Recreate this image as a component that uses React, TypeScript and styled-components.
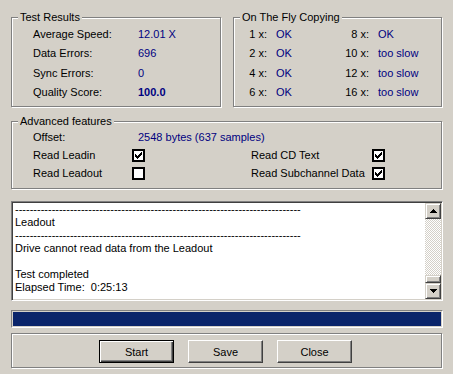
import React from "react";
import styled, { createGlobalStyle, css } from "styled-components";

const Global = createGlobalStyle`
  html, body { margin: 0; padding: 0; background: #d4d0c8; }
  body {
    font-family: "Liberation Sans", Arial, sans-serif;
    font-size: 11px;
    color: #000;
  }
`;

const Window = styled.div`
  width: 453px;
  height: 374px;
  box-sizing: border-box;
  padding: 17px 0 0 11px;
  display: flex;
  flex-direction: column;
  background: #d4d0c8;
  overflow: hidden;
  line-height: 13px;
`;

const TopRow = styled.div`
  display: flex;
  gap: 12px;
`;

const Group = styled.div<{ $w: number; $h: number; $mt?: number }>`
  position: relative;
  box-sizing: border-box;
  width: ${(p) => p.$w}px;
  height: ${(p) => p.$h}px;
  margin-top: ${(p) => p.$mt ?? 0}px;
  border: 1px solid #808080;
  box-shadow: inset 1px 1px 0 #fff, 1px 1px 0 #fff;
`;

const GroupTitle = styled.span`
  position: absolute;
  left: 6px;
  top: -7px;
  padding: 0 2px;
  background: #d4d0c8;
  line-height: 13px;
  white-space: nowrap;
`;

const StatsGrid = styled.div`
  display: grid;
  grid-template-columns: 105px auto;
  grid-auto-rows: 19.33px;
  align-items: center;
  padding: 7px 0 0 21px;
`;

const Value = styled.span<{ $bold?: boolean }>`
  color: #000080;
  font-weight: ${(p) => (p.$bold ? 700 : 400)};
  white-space: nowrap;
`;

const FlyGrid = styled.div`
  display: grid;
  grid-template-columns: 33px 73px 29px auto;
  grid-auto-rows: 19.33px;
  align-items: center;
  padding-top: 7px;
`;

const SpeedLabel = styled.span`
  text-align: right;
  white-space: nowrap;
`;

const SpeedValue = styled(Value)`
  padding-left: 9px;
`;

const AdvancedBody = styled.div`
  display: flex;
  flex-direction: column;
  padding: 6px 0 0 21px;
`;

const OffsetRow = styled.div`
  display: grid;
  grid-template-columns: 105px auto;
  height: 18.4px;
  align-items: center;
`;

const CheckRow = styled.div`
  display: grid;
  grid-template-columns: 99px 13px 106px 121px 13px;
  height: 18.4px;
  align-items: center;
  white-space: nowrap;
`;

const CheckBox = styled.span`
  box-sizing: border-box;
  width: 13px;
  height: 13px;
  border: 2px solid #000;
  background: #fff;
  display: flex;
  align-items: center;
  justify-content: center;
`;

const LogBox = styled.div`
  box-sizing: border-box;
  width: 432px;
  height: 100px;
  margin-top: 12px;
  border: 1px solid;
  border-color: #808080 #fff #fff #808080;
  padding: 1px;
  box-shadow: inset 1px 1px 0 #404040, inset -1px -1px 0 #d4d0c8;
  background: #fff;
  display: flex;
`;

const LogText = styled.div`
  flex: 1;
  padding-left: 2px;
  white-space: pre;
  overflow: hidden;
  line-height: 13px;
`;

const ScrollBar = styled.div`
  width: 16px;
  display: flex;
  flex-direction: column;
`;

const ScrollButton = styled.div<{ $h?: number }>`
  box-sizing: border-box;
  width: 16px;
  height: ${(p) => p.$h ?? 16}px;
  background: #d4d0c8;
  border: 1px solid;
  border-color: #d4d0c8 #404040 #404040 #d4d0c8;
  box-shadow: inset 1px 1px 0 #fff, inset -1px -1px 0 #808080;
  display: flex;
  align-items: center;
  justify-content: center;
`;

const Track = styled.div`
  flex: 1;
  background-color: #d4d0c8;
  background-image: conic-gradient(#fff 25%, #d4d0c8 0 50%, #fff 0 75%, #d4d0c8 0);
  background-size: 2px 2px;
`;

const Progress = styled.div`
  box-sizing: border-box;
  width: 432px;
  height: 18px;
  margin-top: 9px;
  border: 1px solid;
  border-color: #808080 #fff #fff #808080;
  padding: 1px;
`;

const ProgressFill = styled.div`
  height: 100%;
  background: #0a246a;
`;

const ButtonRow = styled.div`
  display: flex;
  gap: 14px;
  padding: 6px 0 0 87px;
`;

const Button = styled.button<{ $default?: boolean }>`
  box-sizing: border-box;
  width: 75px;
  height: 23px;
  padding: 0;
  margin: 0;
  font: 11px "Liberation Sans", Arial, sans-serif;
  color: #000;
  background: #d4d0c8;
  border: 1px solid;
  border-color: #fff #404040 #404040 #fff;
  box-shadow: inset -1px -1px 0 #808080;
  ${(p) =>
    p.$default &&
    css`
      border-color: #000;
      box-shadow: inset 1px 1px 0 #fff, inset -1px -1px 0 #404040, inset -2px -2px 0 #808080;
    `}
`;

const checkPixels: [number, number, number][] = [
  [6, 0, 1],
  [5, 1, 2],
  [0, 2, 1],
  [4, 2, 3],
  [0, 3, 2],
  [3, 3, 3],
  [0, 4, 5],
  [1, 5, 3],
  [2, 6, 1],
];

const Check = ({ on }: { on: boolean }) => (
  <CheckBox>
    {on && (
      <svg width="7" height="7" viewBox="0 0 7 7" shapeRendering="crispEdges">
        {checkPixels.map(([x, y, w], i) => (
          <rect key={i} x={x} y={y} width={w} height={1} fill="#000" />
        ))}
      </svg>
    )}
  </CheckBox>
);

const Arrow = ({ up }: { up: boolean }) => (
  <svg width="7" height="4" viewBox="0 0 7 4" shapeRendering="crispEdges">
    <polygon points={up ? "3.5,0 7,4 0,4" : "0,0 7,0 3.5,4"} fill="#000" />
  </svg>
);

const stats = [
  { label: "Average Speed:", value: "12.01 X" },
  { label: "Data Errors:", value: "696" },
  { label: "Sync Errors:", value: "0" },
  { label: "Quality Score:", value: "100.0", bold: true },
];

const fly = [
  ["1 x:", "OK", "8 x:", "OK"],
  ["2 x:", "OK", "10 x:", "too slow"],
  ["4 x:", "OK", "12 x:", "too slow"],
  ["6 x:", "OK", "16 x:", "too slow"],
];

const dashes = "-".repeat(78);
const logLines = [
  dashes,
  "Leadout",
  dashes,
  "Drive cannot read data from the Leadout",
  "",
  "Test completed",
  "Elapsed Time:  0:25:13",
];

export default function App() {
  return (
    <>
      <Global />
      <Window>
        <TopRow>
          <Group $w={210} $h={90}>
            <GroupTitle>Test Results</GroupTitle>
            <StatsGrid>
              {stats.map((s) => (
                <React.Fragment key={s.label}>
                  <span>{s.label}</span>
                  <Value $bold={s.bold}>{s.value}</Value>
                </React.Fragment>
              ))}
            </StatsGrid>
          </Group>
          <Group $w={209} $h={90}>
            <GroupTitle>On The Fly Copying</GroupTitle>
            <FlyGrid>
              {fly.map((r) => (
                <React.Fragment key={r[0]}>
                  <SpeedLabel>{r[0]}</SpeedLabel>
                  <SpeedValue>{r[1]}</SpeedValue>
                  <SpeedLabel>{r[2]}</SpeedLabel>
                  <SpeedValue>{r[3]}</SpeedValue>
                </React.Fragment>
              ))}
            </FlyGrid>
          </Group>
        </TopRow>
        <Group $w={431} $h={68} $mt={14}>
          <GroupTitle>Advanced features</GroupTitle>
          <AdvancedBody>
            <OffsetRow>
              <span>Offset:</span>
              <Value>2548 bytes (637 samples)</Value>
            </OffsetRow>
            <CheckRow>
              <span>Read Leadin</span>
              <Check on />
              <span />
              <span>Read CD Text</span>
              <Check on />
            </CheckRow>
            <CheckRow>
              <span>Read Leadout</span>
              <Check on={false} />
              <span />
              <span>Read Subchannel Data</span>
              <Check on />
            </CheckRow>
          </AdvancedBody>
        </Group>
        <LogBox>
          <LogText>
            {logLines.map((l, i) => (
              <div key={i}>{l || "\u00a0"}</div>
            ))}
          </LogText>
          <ScrollBar>
            <ScrollButton>
              <Arrow up />
            </ScrollButton>
            <Track />
            <ScrollButton $h={8} />
            <ScrollButton>
              <Arrow up={false} />
            </ScrollButton>
          </ScrollBar>
        </LogBox>
        <Progress>
          <ProgressFill />
        </Progress>
        <Group $w={431} $h={35} $mt={5}>
          <ButtonRow>
            <Button $default>Start</Button>
            <Button>Save</Button>
            <Button>Close</Button>
          </ButtonRow>
        </Group>
      </Window>
    </>
  );
}
